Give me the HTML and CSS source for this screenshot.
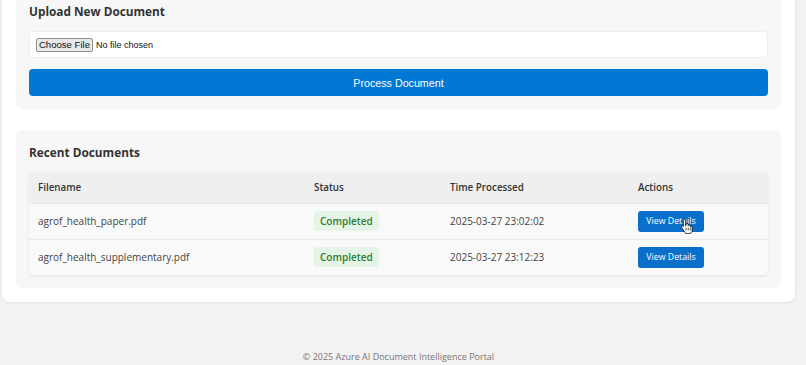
FILE: index.html
```html
<!DOCTYPE html>
<html lang="en">
<head>
<meta charset="utf-8">
<title>Azure AI Document Intelligence Portal</title>
<link rel="stylesheet" href="styles.css">
</head>
<body>
<div class="container">
  <main class="card">
    <section class="panel">
      <h3 class="panel-title">Upload New Document</h3>
      <div class="file-box">
        <button class="file-btn" type="button">Choose File</button>
        <span class="file-text">No file chosen</span>
      </div>
      <button class="process-btn" type="button">Process Document</button>
    </section>
    <section class="panel">
      <h3 class="panel-title">Recent Documents</h3>
      <table class="docs">
        <colgroup>
          <col class="c1"><col class="c2"><col class="c3"><col class="c4">
        </colgroup>
        <thead>
          <tr><th>Filename</th><th>Status</th><th>Time Processed</th><th>Actions</th></tr>
        </thead>
        <tbody>
          <tr>
            <td>agrof_health_paper.pdf</td>
            <td><span class="badge">Completed</span></td>
            <td>2025-03-27 23:02:02</td>
            <td><span class="action-wrap"><button class="view-btn" type="button">View Details</button><svg class="cursor" width="14" height="16" viewBox="0 0 14 16"><path d="M4.5 1.2c.7 0 1.2.5 1.2 1.2v5.2l.3-.1V6.3c0-.6.5-1 1.1-1s1.1.4 1.1 1v1.3c.1-.5.6-.8 1.1-.8.6 0 1 .4 1 1v.9c.2-.3.5-.5.9-.5.6 0 1 .5 1 1.1v3c0 2-1.5 3.4-3.4 3.4H7.3c-1.1 0-2-.5-2.6-1.4L1.6 9.5c-.3-.5-.2-1.1.3-1.4.4-.3 1-.2 1.3.2l.1.1V2.4c0-.7.5-1.2 1.2-1.2z" fill="#fff" stroke="#111" stroke-width="0.9" stroke-linejoin="round"/><path d="M6 9.5v3M8.2 9.5v3M10.3 9.7v2.8" stroke="#111" stroke-width="0.7"/></svg></span></td>
          </tr>
          <tr>
            <td>agrof_health_supplementary.pdf</td>
            <td><span class="badge">Completed</span></td>
            <td>2025-03-27 23:12:23</td>
            <td><button class="view-btn" type="button">View Details</button></td>
          </tr>
        </tbody>
      </table>
    </section>
  </main>
  <footer class="footer">© 2025 Azure AI Document Intelligence Portal</footer>
</div>
</body>
</html>
```
FILE: styles.css
```css
* { box-sizing: border-box; }
html, body { margin: 0; padding: 0; }
body {
  background: #f2f2f2;
  font-family: "Open Sans", "Noto Sans", sans-serif;
  color: #333;
  overflow: hidden;
}
.container {
  width: 793px;
  margin-left: 2px;
}
.card {
  margin-top: -25px;
  background: #fff;
  border-radius: 8px;
  box-shadow: 0 1px 3px rgba(0,0,0,0.08);
  padding: 14px;
  display: flex;
  flex-direction: column;
  gap: 21px;
}
.panel {
  background: #f7f7f7;
  border-radius: 6px;
  padding: 13px;
  display: flex;
  flex-direction: column;
}
.panel-title {
  margin: 0 0 10px;
  font-size: 11.8px;
  line-height: 19px;
  font-weight: 700;
  color: #333;
}
.file-box {
  height: 27px;
  background: #fff;
  border: 1px solid #eeeeee;
  border-radius: 4px;
  display: flex;
  align-items: center;
  padding: 0 6px;
  gap: 3px;
  font-family: "Liberation Sans", Arial, sans-serif;
}
.file-btn {
  height: 14px;
  width: 57px;
  padding: 0;
  font: inherit;
  font-size: 9.6px;
  line-height: 12px;
  white-space: nowrap;
  color: #111;
  background: #e9e9e9;
  border: 1px solid #8f8f8f;
  border-radius: 2px;
}
.file-text {
  font-size: 9px;
  color: #111;
}
.process-btn {
  margin-top: 11px;
  height: 27px;
  border: 0;
  border-radius: 4px;
  background: #0078d4;
  color: #fff;
  font-family: "Liberation Sans", Arial, sans-serif;
  font-size: 10.7px;
  padding: 0;
}
.docs {
  width: 739px;
  border-collapse: collapse;
  table-layout: fixed;
  background: #f9f9f9;
  box-shadow: 0 1px 3px rgba(0,0,0,0.1);
  border-radius: 4px;
  overflow: hidden;
}
.c1 { width: 276px; }
.c2 { width: 136px; }
.c3 { width: 188px; }
.c4 { width: 139px; }
.docs th {
  background: #efefef;
  height: 31px;
  padding: 0 10px 0 9px;
  text-align: left;
  font-size: 9.8px;
  font-weight: 600;
  color: #333;
  border-bottom: 1px solid #e6e6e6;
}
.docs td {
  height: 36px;
  padding: 0 10px 0 9px;
  font-size: 10px;
  color: #444;
  border-bottom: 1px solid #e8e8e8;
}
.docs tbody tr:last-child td { border-bottom: 0; }
.badge {
  display: inline-flex;
  align-items: center;
  height: 20px;
  padding: 0 6px;
  border-radius: 3px;
  background: #e6f4e7;
  color: #2e7d32;
  font-weight: 600;
  font-size: 10px;
}
.view-btn {
  width: 66px;
  height: 21px;
  padding: 0;
  border: 0;
  border-radius: 3px;
  background: #0a6fcb;
  color: #fff;
  font-family: "Open Sans", "Noto Sans", sans-serif;
  font-size: 8.8px;
  vertical-align: middle;
}
.action-wrap {
  position: relative;
  display: inline-block;
  vertical-align: middle;
}
.cursor {
  position: absolute;
  left: 42px;
  top: 7px;
}
.footer {
  margin-top: 48px;
  text-align: center;
  font-size: 9px;
  line-height: 14px;
  color: #777;
}
```
